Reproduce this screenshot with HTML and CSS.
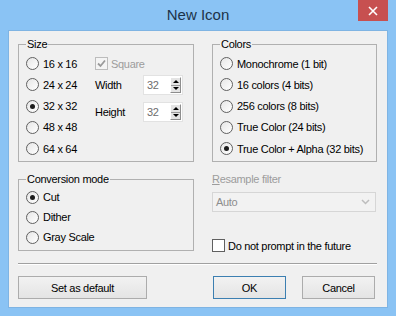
FILE: index.html
```html
<!DOCTYPE html>
<html lang="en">
<head>
  <meta charset="UTF-8" />
  <title>New Icon</title>
  <link rel="stylesheet" href="styles.css">
</head>
<body>
  <div class="window">
    <!-- Caption bar -->
    <div class="titlebar">
      <span class="title">New Icon</span>
      <span class="close">
        <svg width="10" height="10" viewBox="0 0 10 10"><path d="M1 1 L9 9 M9 1 L1 9" stroke="#fff" stroke-width="1.6" fill="none"/></svg>
      </span>
    </div>

    <div class="client">
      <div class="row top-row">
        <fieldset class="group size-group">
          <legend>Size</legend>
          <div class="size-body">
            <div class="size-list">
              <label class="option"><span class="radio"></span>16 x 16</label>
              <label class="option"><span class="radio"></span>24 x 24</label>
              <label class="option"><span class="radio checked"></span>32 x 32</label>
              <label class="option"><span class="radio"></span>48 x 48</label>
              <label class="option"><span class="radio"></span>64 x 64</label>
            </div>
            <div class="size-props">
              <label class="option disabled">
                <span class="check dim">
                  <svg width="11" height="11" viewBox="0 0 11 11"><path d="M2 5.5 L4.5 8 L9 2.5" stroke="#9a9a9a" stroke-width="1.8" fill="none"/></svg>
                </span>Square
              </label>
              <div class="dims">
                <span>Width</span>
                <div class="spin"><span class="spin-value">32</span><span class="spin-btns"><span class="up"></span><span class="down"></span></span></div>
                <span>Height</span>
                <div class="spin"><span class="spin-value">32</span><span class="spin-btns"><span class="up"></span><span class="down"></span></span></div>
              </div>
            </div>
          </div>
        </fieldset>

        <fieldset class="group colors-group">
          <legend>Colors</legend>
          <label class="option"><span class="radio"></span>Monochrome (1 bit)</label>
          <label class="option"><span class="radio"></span>16 colors (4 bits)</label>
          <label class="option"><span class="radio"></span>256 colors (8 bits)</label>
          <label class="option"><span class="radio"></span>True Color (24 bits)</label>
          <label class="option"><span class="radio checked"></span>True Color + Alpha (32 bits)</label>
        </fieldset>
      </div>

      <div class="row mid-row">
        <fieldset class="group conv-group">
          <legend>Conversion mode</legend>
          <label class="option short"><span class="radio checked"></span>Cut</label>
          <label class="option short"><span class="radio"></span>Dither</label>
          <label class="option short"><span class="radio"></span>Gray Scale</label>
        </fieldset>

        <div class="resample">
          <div class="resample-label"><u>R</u>esample filter</div>
          <div class="select">
            <span>Auto</span>
            <svg width="9" height="6" viewBox="0 0 9 6"><path d="M1 1 L4.5 4.5 L8 1" stroke="#bdbdbd" stroke-width="1.5" fill="none"/></svg>
          </div>
          <label class="option prompt"><span class="check"></span>Do not prompt in the future</label>
        </div>
      </div>

      <div class="separator"></div>

      <div class="buttons">
        <button class="btn wide">Set as default</button>
        <div class="btn-group">
          <button class="btn default">OK</button>
          <button class="btn">Cancel</button>
        </div>
      </div>
    </div>
  </div>
</body>
</html>
```

FILE: styles.css
```css
/* Basic page styling */
* {
  box-sizing: border-box;
}
body {
  margin: 0;
  font-family: "Liberation Sans", Arial, sans-serif;
  font-size: 11px;
  letter-spacing: -0.3px;
  color: #000;
}
/* Window frame */
.window {
  width: 396px;
  height: 316px;
  background: #8ac3f4;
  padding: 0 8px 8px;
  display: flex;
  flex-direction: column;
}
.titlebar {
  height: 30px;
  display: grid;
  grid-template-columns: 1fr auto 1fr;
  align-items: start;
}
.title {
  grid-column: 2;
  font-size: 15px;
  line-height: 30px;
  letter-spacing: 0;
  color: #1d3349;
}
.close {
  grid-column: 3;
  justify-self: end;
  width: 30px;
  height: 21px;
  background: #c75050;
  display: flex;
  justify-content: center;
  align-items: center;
}
/* Dialog body */
.client {
  flex: 1;
  background: #f0f0f0;
  border: 1px solid #7fb4e3;
  padding: 7px 10px 0 9px;
  display: flex;
  flex-direction: column;
}
.row {
  display: flex;
  gap: 18px;
}
.mid-row {
  margin-top: 11px;
  align-items: flex-start;
}
/* Group boxes */
.group {
  margin: 0;
  border: 1px solid #b0b0b0;
  padding: 2px 6px 2px 7px;
  min-width: 0;
}
.group legend {
  padding: 0 1px;
  line-height: 13px;
}
.size-group {
  width: 176px;
}
.colors-group {
  width: 165px;
}
.conv-group {
  width: 176px;
  padding-top: 1px;
  padding-bottom: 3px;
}
.size-body {
  display: flex;
}
.size-list {
  width: 69px;
}
/* Radio and check rows */
.option {
  display: flex;
  align-items: center;
  gap: 4px;
  height: 21.25px;
  white-space: nowrap;
}
.option.short {
  height: 20px;
}
.option.disabled {
  color: #9c9c9c;
  gap: 3px;
  height: 21px;
}
.radio {
  width: 13px;
  height: 13px;
  border-radius: 50%;
  border: 1px solid #606060;
  background: linear-gradient(135deg, #e6e6e6, #ffffff);
  display: flex;
  justify-content: center;
  align-items: center;
  flex: none;
}
.radio.checked::after {
  content: "";
  width: 5px;
  height: 5px;
  border-radius: 50%;
  background: #1b1b1b;
}
.check {
  width: 13px;
  height: 13px;
  border: 1px solid #606060;
  background: #fff;
  display: flex;
  justify-content: center;
  align-items: center;
  flex: none;
}
.check.dim {
  border-color: #bcbcbc;
  background: #f4f4f4;
}
/* Width / Height spinners */
.dims {
  margin-top: 1px;
  display: grid;
  grid-template-columns: 48px 40px;
  grid-auto-rows: 20px;
  row-gap: 7px;
  align-items: center;
}
.spin {
  height: 20px;
  border: 1px solid #e2e2e2;
  background: #fff;
  display: flex;
  align-items: center;
  justify-content: space-between;
  padding: 0 1px 0 3px;
}
.spin-value {
  color: #6d6d6d;
}
.spin-btns {
  width: 11px;
  height: 16px;
  border: 1px solid #8d8d8d;
  border-top-color: #fff;
  border-left-color: #fff;
  background: #e4e4e4;
  display: flex;
  flex-direction: column;
}
.spin-btns span {
  flex: 1;
  display: flex;
  justify-content: center;
  align-items: center;
}
.spin-btns .up {
  border-bottom: 1px solid #9a9a9a;
}
.spin-btns .up::after {
  content: "";
  border: 3px solid transparent;
  border-bottom: 3px solid #000;
  border-top: 0;
}
.spin-btns .down::after {
  content: "";
  border: 3px solid transparent;
  border-top: 3px solid #000;
  border-bottom: 0;
}
/* Resample filter column */
.resample {
  width: 165px;
  display: flex;
  flex-direction: column;
}
.resample-label {
  line-height: 13px;
  color: #9c9c9c;
}
.select {
  margin-top: 6px;
  width: 164px;
  height: 20px;
  border: 1px solid #d6d6d6;
  background: #f2f2f2;
  color: #8d8d8d;
  display: flex;
  align-items: center;
  justify-content: space-between;
  padding: 0 5px 0 3px;
}
.prompt {
  margin-top: 26px;
  height: 15px;
  gap: 3px;
}
/* Divider line */
.separator {
  margin-top: 10px;
  height: 2px;
  border-top: 1px solid #a0a0a0;
  border-bottom: 1px solid #fff;
}
/* Buttons */
.buttons {
  margin-top: 11px;
  display: flex;
  justify-content: space-between;
}
.btn-group {
  display: flex;
  gap: 16px;
  margin-right: 2px;
}
.btn {
  height: 23px;
  width: 73px;
  border: 1px solid #acacac;
  background: linear-gradient(#f2f2f2, #e4e4e4);
  font-family: inherit;
  font-size: 11px;
  letter-spacing: -0.3px;
  color: #000;
  padding: 0;
}
.btn.wide {
  width: 129px;
}
.btn.default {
  border-color: #3c7fb1;
}
```
